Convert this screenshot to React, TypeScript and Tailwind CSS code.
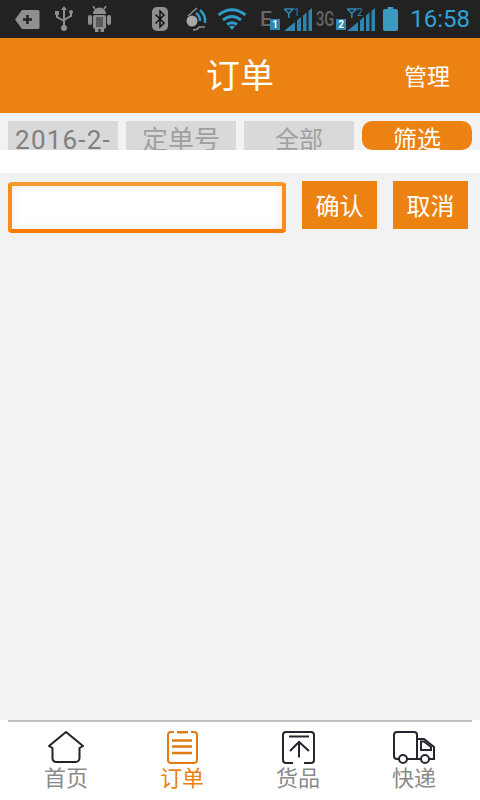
import { ReactNode } from 'react';

const font = { fontFamily: '"Roboto", "Noto Sans CJK SC", sans-serif' };

function SignalBars({ badge }: { badge: string }) {
  return (
    <svg width="28" height="24" viewBox="0 0 28 24" className="shrink-0 mt-[1px]">
      <path d="M0 23 L11 14 V23 Z M13 12.500 L17 9 V23 H13 Z M19 7.500 L22.500 4.500 V23 H19 Z M24.500 3 L28 0 V23 H24.500 Z" fill="#2e86b0" />
      <path d="M0.500 1 H9 L4.800 5.500 Z M4.800 5 V10" fill="none" stroke="#2e86b0" strokeWidth="1.600" />
      <text x="10" y="8" fontSize="10" fill="#2e86b0" fontFamily="Roboto, sans-serif">{badge}</text>
    </svg>
  );
}

function StatusBar() {
  return (
    <div className="h-[38px] bg-[#222222] flex items-center pl-[15px] pr-[10px] shrink-0">
      {/* tag with plus */}
      <svg width="25" height="21" viewBox="0 0 25 21" className="shrink-0">
        <path d="M7 1 H23 a1.500 1.500 0 0 1 1.500 1.500 V18.500 a1.500 1.500 0 0 1 -1.500 1.500 H7 L0 10.500 Z" fill="#8f8f8f" />
        <path d="M8 10.500 H17 M12.500 6 V15" stroke="#222222" strokeWidth="2.500" />
      </svg>
      {/* usb */}
      <svg width="18" height="26" viewBox="0 0 18 26" className="ml-[15px] shrink-0">
        <path d="M9 2 V22 M2 7 V11 L9 15 M16 6 V10 L9 14" fill="none" stroke="#8f8f8f" strokeWidth="2" />
        <circle cx="9" cy="22" r="3" fill="#8f8f8f" />
        <rect x="0" y="5" width="4" height="4" fill="#8f8f8f" />
        <circle cx="16" cy="6" r="2" fill="#8f8f8f" />
        <path d="M6 4 L9 0 L12 4 Z" fill="#8f8f8f" />
      </svg>
      {/* android */}
      <svg width="23" height="26" viewBox="0 0 23 26" className="ml-[15px] shrink-0">
        <path d="M5 8 a6.500 6.500 0 0 1 13 0 Z" fill="#8f8f8f" />
        <path d="M7 3 L5 0 M16 3 L18 0" stroke="#8f8f8f" strokeWidth="1.500" />
        <rect x="5" y="9" width="13" height="14" rx="2" fill="#8f8f8f" />
        <rect x="0" y="9" width="4" height="10" rx="2" fill="#8f8f8f" />
        <rect x="19" y="9" width="4" height="10" rx="2" fill="#8f8f8f" />
        <rect x="7" y="22" width="3.500" height="4" fill="#8f8f8f" />
        <rect x="12.500" y="22" width="3.500" height="4" fill="#8f8f8f" />
        <path d="M8 11 h7 v10 h-7 Z" fill="#5a5a5a" />
      </svg>
      {/* bluetooth */}
      <svg width="16" height="24" viewBox="0 0 16 24" className="ml-[41px] shrink-0">
        <rect x="0" y="0" width="16" height="24" rx="5" fill="#8f8f8f" />
        <path d="M3.500 7.500 L12 16 L8 20 V4 L12 8 L3.500 16.500" fill="none" stroke="#111111" strokeWidth="1.500" />
      </svg>
      {/* sync */}
      <svg width="23" height="26" viewBox="0 0 23 26" className="ml-[17px] shrink-0">
        <circle cx="7" cy="15" r="5.500" fill="#a8a8a8" />
        <path d="M3 10 L12 2 M8 24 Q13 24 14 21 L20 21" fill="none" stroke="#8f8f8f" strokeWidth="1.500" />
        <path d="M11 7 Q15 10 15 15 M15 4 Q21 9 20 17" fill="none" stroke="#2e9ac8" strokeWidth="2.500" />
      </svg>
      {/* wifi */}
      <svg width="30" height="22" viewBox="0 0 30 22" className="ml-[9px] shrink-0">
        <path d="M1.500 7 Q15 -3.500 28.500 7 M6 12 Q15 5 24 12 M10 16.500 Q15 13 20 16.500" fill="none" stroke="#2e9ac8" strokeWidth="3" />
        <path d="M12 18.500 Q15 16.500 18 18.500 L15 22 Z" fill="#2e9ac8" />
      </svg>
      {/* E1 */}
      <div className="relative w-[20px] h-[26px] ml-[13px] shrink-0">
        <span className="absolute left-0 top-0 text-[21px] leading-[26px] font-medium text-[#666666]">E</span>
        <span className="absolute left-[10px] bottom-[2px] w-[10px] h-[11px] bg-[#2e86b0] text-white text-[10px] leading-[11px] font-bold text-center">1</span>
      </div>
      <div className="ml-[4px] shrink-0"><SignalBars badge="1" /></div>
      {/* 3G2 */}
      <div className="relative w-[30px] h-[26px] ml-[4px] shrink-0">
        <span className="absolute left-0 top-0 text-[21px] leading-[26px] font-medium text-[#666666] origin-left scale-x-[0.7]">3G</span>
        <span className="absolute left-[20px] bottom-[2px] w-[10px] h-[11px] bg-[#2e86b0] text-white text-[10px] leading-[11px] font-bold text-center">2</span>
      </div>
      <div className="ml-[1px] shrink-0"><SignalBars badge="2" /></div>
      {/* battery */}
      <svg width="15" height="24" viewBox="0 0 16 25" className="ml-[8px] shrink-0" preserveAspectRatio="none">
        <path d="M5 0 H11 V2 H14 a2 2 0 0 1 2 2 V23 a2 2 0 0 1 -2 2 H2 a2 2 0 0 1 -2 -2 V4 a2 2 0 0 1 2 -2 H5 Z" fill="#3a9abf" />
      </svg>
      <span className="ml-auto text-[24px] leading-none text-[#2fa2d6] shrink-0">16:58</span>
    </div>
  );
}

function FilterCell({ children, className }: { children: ReactNode; className: string }) {
  return (
    <div className={`w-[110px] h-[29px] overflow-hidden text-center whitespace-nowrap leading-[38px] ${className}`}>
      {children}
    </div>
  );
}

function HomeIcon() {
  return (
    <svg width="36" height="32" viewBox="0 0 36 32" fill="none" stroke="#222228" strokeWidth="2" strokeLinejoin="round">
      <path d="M18 1 L35 15 L31.500 17 V27 a4 4 0 0 1 -4 4 H8 a4 4 0 0 1 -3.500 -4 V17 L1 15 Z" />
    </svg>
  );
}

function OrderIcon() {
  return (
    <svg width="31" height="33" viewBox="0 0 31 33" fill="none" stroke="#e07b12" strokeWidth="2">
      <path d="M7 1 H4 a3 3 0 0 0 -3 3 V29 a3 3 0 0 0 3 3 H27 a3 3 0 0 0 3 -3 V4 a3 3 0 0 0 -3 -3 H24" />
      <path d="M10 1.200 H21" strokeWidth="2.500" />
      <path d="M5 9.500 H25 M5 15.500 H25 M5 22 H25" strokeWidth="2.500" />
    </svg>
  );
}

function GoodsIcon() {
  return (
    <svg width="33" height="33" viewBox="0 0 33 33" fill="none" stroke="#262630" strokeWidth="2">
      <path d="M11 32 H4 a3 3 0 0 1 -3 -3 V4 a3 3 0 0 1 3 -3 H29 a3 3 0 0 1 3 3 V29 a3 3 0 0 1 -3 3 H22" />
      <path d="M7 5.500 H27 M17 11 V26.500 M8 20 L17 11 L27 20" />
    </svg>
  );
}

function TruckIcon() {
  return (
    <svg width="42" height="33" viewBox="0 0 42 33" fill="none" stroke="#262630" strokeWidth="2">
      <path d="M6 28 H4 a3 3 0 0 1 -3 -3 V4 a3 3 0 0 1 3 -3 H21 a3 3 0 0 1 3 3 V28 H14" />
      <path d="M24 8 H31 L41 16 V28 H36 M28 28 H24" />
      <path d="M28 10.500 H31 L38 16 V19 H28 Z" strokeWidth="2" />
      <circle cx="10" cy="28" r="4" />
      <circle cx="32" cy="28" r="4" />
    </svg>
  );
}

function NavItem({ icon, label, active }: { icon: ReactNode; label: string; active?: boolean }) {
  return (
    <div className="w-[116px] flex flex-col items-center">
      <div className="h-[36px] flex items-center justify-center">{icon}</div>
      <span className={`text-[22px] leading-[24px] mt-[2px] ${active ? 'text-[#e98315]' : 'text-[#8a8a8a]'}`}>{label}</span>
    </div>
  );
}

export default function App() {
  return (
    <div className="w-[480px] h-[800px] flex flex-col overflow-hidden bg-white" style={font}>
      <StatusBar />

      <div className="h-[75px] bg-[#ec8212] relative flex items-center justify-center shrink-0">
        <span className="text-white text-[34px] leading-none">订单</span>
        <span className="absolute right-[30px] top-[25px] text-white text-[23px] leading-[28px] pt-[1px]">管理</span>
      </div>

      <div className="h-[37px] bg-[#f2f2f2] pt-[8px] px-[8px] flex gap-[8px] shrink-0">
        <FilterCell className="bg-[#d9d9d9] text-[#808080] text-[26px] tracking-[1.2px]">2016-2-</FilterCell>
        <FilterCell className="bg-[#d9d9d9] text-[#a0a0a0] text-[26px]">定单号</FilterCell>
        <FilterCell className="bg-[#d9d9d9] text-[#a0a0a0] text-[24px]">全部</FilterCell>
        <FilterCell className="bg-[#ec8212] text-white text-[24px] rounded-[10px]">筛选</FilterCell>
      </div>

      <div className="h-[23px] bg-white shrink-0" />

      <div className="flex-1 bg-[#f2f2f2] pt-[8px] pl-[8px]">
        <div className="flex items-start">
          <div className="w-[278px] h-[51px] mt-[1px] rounded-[4px] border-[4px] border-[#f88f1c] border-t-[#fb9a2d] border-b-[#f67c05] bg-white shadow-[inset_0_0_8px_rgba(0,0,0,0.1)]" />
          <div className="w-[75px] h-[48px] ml-[16px] pt-[3px] bg-[#ec8212] text-white text-[24px] flex items-center justify-center">确认</div>
          <div className="w-[75px] h-[48px] ml-[16px] pt-[3px] bg-[#ec8212] text-white text-[24px] flex items-center justify-center">取消</div>
        </div>
      </div>

      <div className="h-[80px] bg-white shrink-0">
        <div className="mx-[8px] h-[2px] bg-[#c0c0c0]" />
        <div className="flex px-[8px] pt-[7px]">
          <NavItem icon={<HomeIcon />} label="首页" />
          <NavItem icon={<OrderIcon />} label="订单" active />
          <NavItem icon={<GoodsIcon />} label="货品" />
          <NavItem icon={<TruckIcon />} label="快递" />
        </div>
      </div>
    </div>
  );
}
